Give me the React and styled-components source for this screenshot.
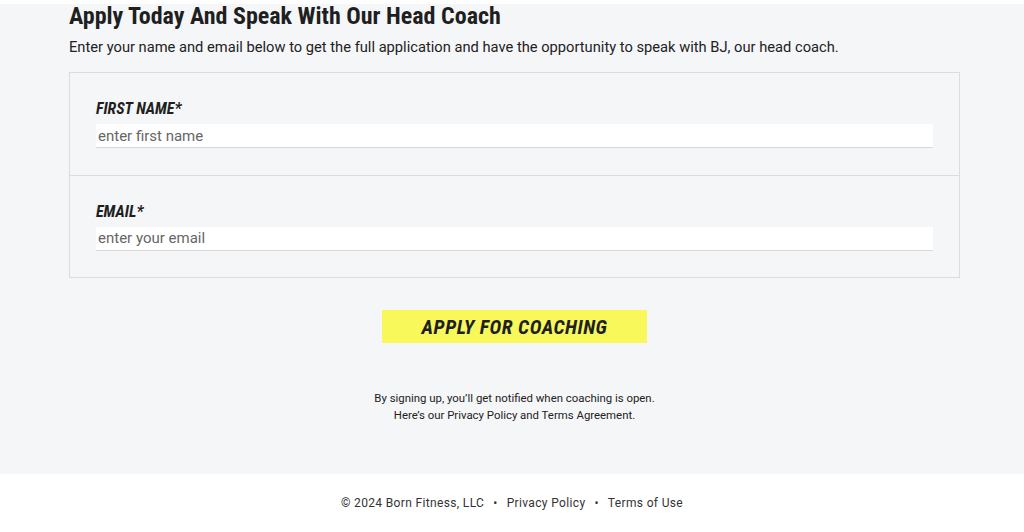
import React from 'react';
import styled, { createGlobalStyle } from 'styled-components';

const GlobalStyle = createGlobalStyle`
  html, body {
    margin: 0;
    padding: 0;
    background: #ffffff;
    font-family: Roboto, "Liberation Sans", Arial, sans-serif;
    color: #222222;
  }
`;

const App = () => {
  return (
    <>
      <GlobalStyle />
      <Page>
        <Main>
          <Heading>Apply Today And Speak With Our Head Coach</Heading>
          <Intro>
            Enter your name and email below to get the full application and have the opportunity to speak with BJ, our head coach.
          </Intro>
          <FormBox>
            <Field>
              <Label>FIRST NAME*</Label>
              <Input type="text" placeholder="enter first name" />
            </Field>
            <Field>
              <Label>EMAIL*</Label>
              <Input type="email" placeholder="enter your email" />
            </Field>
          </FormBox>
          <ButtonRow>
            <ApplyButton>APPLY FOR COACHING</ApplyButton>
          </ButtonRow>
          <FinePrint>
            By signing up, you’ll get notified when coaching is open.
            <br />
            Here’s our Privacy Policy and Terms Agreement.
          </FinePrint>
        </Main>
        <Footer>
          <span>© 2024 Born Fitness, LLC</span>
          <Dot>•</Dot>
          <FooterLink>Privacy Policy</FooterLink>
          <Dot>•</Dot>
          <FooterLink>Terms of Use</FooterLink>
        </Footer>
      </Page>
    </>
  );
};

export default App;

// Styled Components
const Page = styled.div`
  width: 100%;
  min-height: 532px;
  padding-top: 4px;
  background: #ffffff;
`;

const Main = styled.main`
  background: #f5f6f8;
  padding: 0 64px 0 69px;
  height: 470px;
  box-sizing: border-box;
`;

const Heading = styled.h1`
  margin: 0;
  font-family: Roboto, "Liberation Sans", sans-serif;
  font-stretch: condensed;
  font-weight: 700;
  font-size: 24px;
  line-height: 24px;
  color: #1f1f22;
`;

const Intro = styled.p`
  margin: 9px 0 0;
  font-size: 14.7px;
  line-height: 20px;
  color: #222222;
`;

const FormBox = styled.div`
  margin-top: 15px;
  border: 1px solid #dcdcdc;
  box-sizing: border-box;
  height: 206px;
  display: flex;
  flex-direction: column;
`;

const Field = styled.div`
  flex: 1;
  padding: 27px 26px 0 26px;
  & + & {
    border-top: 1px solid #dcdcdc;
  }
`;

const Label = styled.label`
  display: block;
  font-family: Roboto, "Liberation Sans", sans-serif;
  font-stretch: condensed;
  font-style: italic;
  font-weight: 700;
  font-size: 16px;
  line-height: 18px;
  color: #1f1f22;
  margin-bottom: 6px;
`;

const Input = styled.input`
  display: block;
  width: 100%;
  box-sizing: border-box;
  height: 24px;
  border: none;
  border-bottom: 1px solid #d8d8d8;
  background: #ffffff;
  padding: 0 2px;
  font-family: Roboto, "Liberation Sans", sans-serif;
  font-size: 15px;
  color: #222222;
  outline: none;
  &::placeholder {
    color: #666666;
  }
`;

const ButtonRow = styled.div`
  display: flex;
  justify-content: center;
  margin-top: 32px;
`;

const ApplyButton = styled.button`
  width: 265px;
  height: 33px;
  border: none;
  background: #f8f85b;
  font-family: Roboto, "Liberation Sans", sans-serif;
  font-stretch: condensed;
  font-style: italic;
  font-weight: 700;
  font-size: 20px;
  letter-spacing: 0.5px;
  color: #1f1f22;
  cursor: pointer;
`;

const FinePrint = styled.p`
  margin: 47px 0 0;
  text-align: center;
  font-size: 11.4px;
  line-height: 17px;
  color: #222222;
`;

const Footer = styled.footer`
  height: 58px;
  display: flex;
  align-items: center;
  justify-content: center;
  font-size: 12px;
  letter-spacing: 0.35px;
  color: #333333;
`;

const Dot = styled.span`
  margin: 0 9px;
`;

const FooterLink = styled.span`
  color: #333333;
`;
